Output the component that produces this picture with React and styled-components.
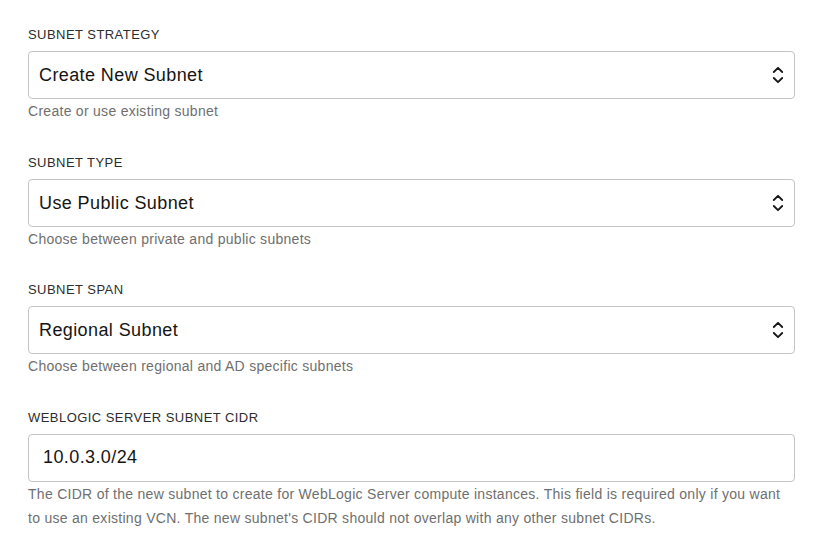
import React from "react";
import styled, { createGlobalStyle } from "styled-components";

const Global = createGlobalStyle`
  html, body { margin: 0; padding: 0; background: #ffffff; }
  body { font-family: "Liberation Sans", Arial, sans-serif; }
`;

const Page = styled.div`
  display: flex;
  flex-direction: column;
  gap: 31.5px;
  padding: 27px 27px 0 28px;
`;

const Field = styled.div`
  display: flex;
  flex-direction: column;
`;

const Label = styled.label`
  font-size: 13px;
  line-height: 16px;
  letter-spacing: 0.45px;
  color: #2d2d2d;
  text-transform: uppercase;
  margin-bottom: 8px;
`;

const SelectWrap = styled.div`
  position: relative;
`;

const Select = styled.select`
  appearance: none;
  -webkit-appearance: none;
  width: 100%;
  height: 48px;
  box-sizing: border-box;
  border: 1px solid #c4c4c4;
  border-radius: 4px;
  background: #fff;
  padding: 0 40px 0 10px;
  font-family: "Liberation Sans", Arial, sans-serif;
  font-size: 18px;
  letter-spacing: 0.4px;
  color: #161513;
  outline: none;
`;

const Input = styled.input`
  width: 100%;
  height: 48px;
  box-sizing: border-box;
  border: 1px solid #c4c4c4;
  border-radius: 4px;
  background: #fff;
  padding: 0 14px;
  font-family: "Liberation Sans", Arial, sans-serif;
  font-size: 18px;
  letter-spacing: 0.4px;
  color: #161513;
  outline: none;
`;

const Chevrons = styled.svg`
  position: absolute;
  right: 10px;
  top: 50%;
  transform: translateY(-50%);
  pointer-events: none;
`;

const Help = styled.div`
  font-size: 14px;
  line-height: 24px;
  letter-spacing: 0.28px;
  color: #6f6f6f;
`;

const Icon = () => (
  <Chevrons width="14" height="22" viewBox="0 0 14 22">
    <path d="M2.8 8 L7 3.8 L11.2 8" fill="none" stroke="#161513" strokeWidth="1.8" strokeLinecap="round" strokeLinejoin="round" />
    <path d="M2.8 14 L7 18.2 L11.2 14" fill="none" stroke="#161513" strokeWidth="1.8" strokeLinecap="round" strokeLinejoin="round" />
  </Chevrons>
);

const SelectField = ({ label, value, help }) => (
  <Field>
    <Label>{label}</Label>
    <SelectWrap>
      <Select defaultValue={value}>
        <option>{value}</option>
      </Select>
      <Icon />
    </SelectWrap>
    <Help>{help}</Help>
  </Field>
);

export default function App() {
  return (
    <>
      <Global />
      <Page>
        <SelectField label="Subnet Strategy" value="Create New Subnet" help="Create or use existing subnet" />
        <SelectField label="Subnet Type" value="Use Public Subnet" help="Choose between private and public subnets" />
        <SelectField label="Subnet Span" value="Regional Subnet" help="Choose between regional and AD specific subnets" />
        <Field>
          <Label>WebLogic Server Subnet CIDR</Label>
          <Input defaultValue="10.0.3.0/24" />
          <Help>
            The CIDR of the new subnet to create for WebLogic Server compute instances. This field is required only if you want to use an existing VCN. The new subnet's CIDR should not overlap with any other subnet CIDRs.
          </Help>
        </Field>
      </Page>
    </>
  );
}
